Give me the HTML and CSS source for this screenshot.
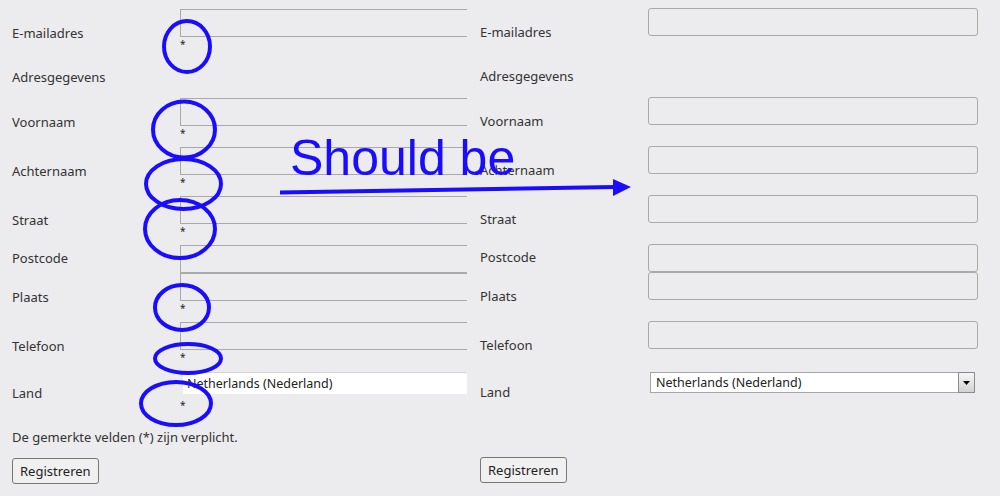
FILE: index.html
```html
<!DOCTYPE html>
<html lang="nl">
<head>
    <meta charset="UTF-8">
    <meta name="viewport" content="width=device-width, initial-scale=1.0">
    <title>Registreren</title>
    <link rel="stylesheet" href="styles.css">
</head>
<body>
    <div class="compare">
        <!-- Huidige weergave: sterretjes onder de velden -->
        <div class="panel panel-before">
            <form class="form">
                <div class="row">
                    <label class="label">E-mailadres</label>
                    <div class="field"><input type="text" class="input"><span class="req">*</span></div>
                </div>
                <div class="row row-heading"><span class="label">Adresgegevens</span></div>
                <div class="row">
                    <label class="label">Voornaam</label>
                    <div class="field"><input type="text" class="input"><span class="req">*</span></div>
                </div>
                <div class="row">
                    <label class="label">Achternaam</label>
                    <div class="field"><input type="text" class="input"><span class="req">*</span></div>
                </div>
                <div class="row">
                    <label class="label">Straat</label>
                    <div class="field"><input type="text" class="input"><span class="req">*</span></div>
                </div>
                <div class="row">
                    <label class="label">Postcode</label>
                    <div class="field"><input type="text" class="input"></div>
                </div>
                <div class="row">
                    <label class="label">Plaats</label>
                    <div class="field"><input type="text" class="input"><span class="req">*</span></div>
                </div>
                <div class="row">
                    <label class="label">Telefoon</label>
                    <div class="field"><input type="text" class="input"><span class="req">*</span></div>
                </div>
                <div class="row row-land">
                    <label class="label">Land</label>
                    <div class="field">
                        <div class="select"><span class="select-text">Netherlands (Nederland)</span></div>
                        <span class="req">*</span>
                    </div>
                </div>
                <p class="note">De gemerkte velden (*) zijn verplicht.</p>
                <button type="button" class="btn">Registreren</button>
            </form>
        </div>

        <!-- Zo zou het moeten zijn -->
        <div class="panel panel-after">
            <form class="form">
                <div class="row">
                    <label class="label">E-mailadres</label>
                    <div class="field"><input type="text" class="input"><span class="req"></span></div>
                </div>
                <div class="row row-heading"><span class="label">Adresgegevens</span></div>
                <div class="row">
                    <label class="label">Voornaam</label>
                    <div class="field"><input type="text" class="input"><span class="req"></span></div>
                </div>
                <div class="row">
                    <label class="label">Achternaam</label>
                    <div class="field"><input type="text" class="input"><span class="req"></span></div>
                </div>
                <div class="row">
                    <label class="label">Straat</label>
                    <div class="field"><input type="text" class="input"><span class="req"></span></div>
                </div>
                <div class="row">
                    <label class="label">Postcode</label>
                    <div class="field"><input type="text" class="input"></div>
                </div>
                <div class="row">
                    <label class="label">Plaats</label>
                    <div class="field"><input type="text" class="input"><span class="req"></span></div>
                </div>
                <div class="row">
                    <label class="label">Telefoon</label>
                    <div class="field"><input type="text" class="input"><span class="req"></span></div>
                </div>
                <div class="row row-land">
                    <label class="label">Land</label>
                    <div class="field">
                        <div class="select">
                            <span class="select-text">Netherlands (Nederland)</span>
                            <span class="select-btn">
                                <svg width="7" height="4" viewBox="0 0 7 4"><path d="M0 0h7L3.5 4z" fill="#000"/></svg>
                            </span>
                        </div>
                        <span class="req"></span>
                    </div>
                </div>
                <p class="note"></p>
                <button type="button" class="btn">Registreren</button>
            </form>
        </div>
    </div>

    <!-- Aantekeningen in blauw -->
    <svg class="annotations" width="1000" height="500" viewBox="0 0 1000 500">
        <g fill="none" stroke="#1a0dff" stroke-width="4">
            <ellipse cx="187" cy="46.5" rx="23" ry="25.5"/>
            <ellipse cx="184" cy="129.5" rx="31" ry="28"/>
            <ellipse cx="183.5" cy="184" rx="37.5" ry="25"/>
            <ellipse cx="180" cy="229" rx="35" ry="29"/>
            <ellipse cx="182" cy="307.5" rx="27" ry="22.5"/>
            <ellipse cx="188" cy="358.5" rx="33" ry="14.5"/>
            <ellipse cx="176" cy="403.5" rx="35" ry="21.5"/>
            <line x1="280" y1="192.5" x2="615" y2="187"/>
        </g>
        <polygon points="613,179 631,187 613,196" fill="#1a0dff"/>
        <text x="290" y="175" class="should-be">Should be</text>
    </svg>
</body>
</html>
```

FILE: styles.css
```css
/* basis */
* {
  margin: 0;
  padding: 0;
  box-sizing: border-box;
}

body {
  position: relative;
  width: 1000px;
  height: 500px;
  overflow: hidden;
  background: #fff;
  font-family: 'Noto Sans', 'Liberation Sans', sans-serif;
  font-size: 13px;
  color: #333;
}

.compare {
  display: flex;
  height: 496px;
}

.panel {
  background-color: #ececee;
  overflow: hidden;
}

.panel-before {
  width: 467px;
  padding: 9px 0 0 12px;
}

.panel-after {
  flex: 1;
  padding: 8px 0 0 13px;
}

/* rijen van het formulier */
.row {
  display: flex;
  align-items: center;
}

.label {
  width: 168px;
  flex-shrink: 0;
  line-height: 20px;
  padding-bottom: 2px;
}

.row-heading {
  height: 40px;
}

.row-land {
  margin-top: 1px;
}

.panel-after .row-land {
  margin-top: 2px;
}

.field {
  display: flex;
  flex-direction: column;
  width: 330px;
  flex-shrink: 0;
}

.input {
  width: 330px;
  height: 28px;
  padding: 0 4px;
  border: 1px solid #a9a9a9;
  border-radius: 0;
  background: transparent;
  font: inherit;
  outline: none;
}

.panel-after .input {
  border-radius: 3px;
}

.req {
  display: block;
  height: 21px;
  padding-left: 0;
  font-size: 10px;
  line-height: 14px;
  color: #222;
}

.row-land .req {
  height: 21px;
  padding-top: 4px;
}

/* land-keuze */
.select {
  display: flex;
  align-items: center;
  height: 22px;
  margin-left: 3px;
  width: 330px;
  background: #fff;
  border-top: 1px solid #d4d4d4;
  padding-left: 4px;
  font-size: 12.5px;
  color: #222;
}

.panel-after .select {
  height: 21px;
  width: 325px;
  margin-left: 2px;
  border: 1px solid #a5a5a5;
  padding-left: 5px;
  justify-content: space-between;
}

.select-btn {
  display: flex;
  align-items: center;
  justify-content: center;
  width: 17px;
  height: 21px;
  margin: -1px -1px -1px 0;
  border: 1px solid #8a8a8a;
  border-radius: 1px;
  background: linear-gradient(to bottom, #f6f6f6, #d2d2d2);
}

.note {
  height: 20px;
  margin-top: 12px;
  line-height: 20px;
}

.btn {
  margin-top: 11px;
  height: 26px;
  padding: 0 7px;
  border: 1px solid #777;
  border-radius: 3px;
  background: #f0f0f1;
  font: inherit;
  font-size: 13px;
  color: #222;
}

/* blauwe aantekeningen bovenop */
.annotations {
  position: absolute;
  top: 0;
  left: 0;
  pointer-events: none;
}

.should-be {
  font-family: 'Liberation Sans', Arial, sans-serif;
  font-size: 50px;
  fill: #1a0dff;
}
```
